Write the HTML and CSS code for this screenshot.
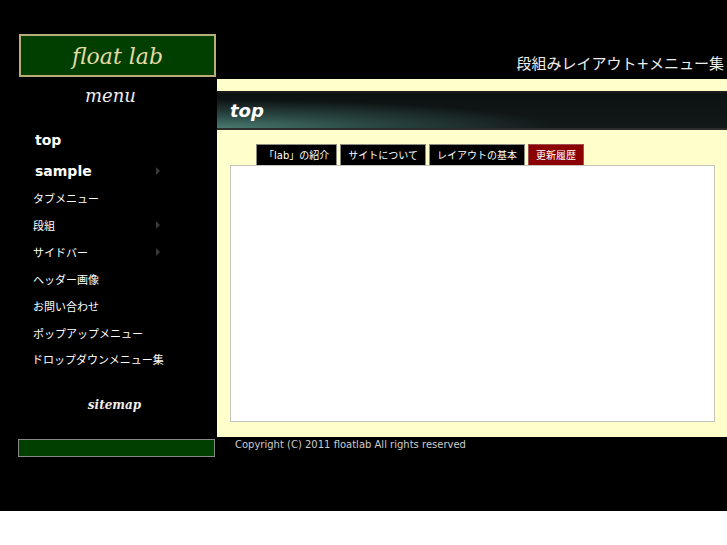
FILE: index.html
```html
<!DOCTYPE html>
<html lang="ja">
<head>
    <meta charset="UTF-8">
    <meta name="viewport" content="width=device-width, initial-scale=1.0">
    <title>float lab</title>
    <link rel="stylesheet" href="styles.css">
</head>
<body>
    <div class="page">
        <div class="side">
            <div class="logo">float lab</div>
            <div class="menu-title">menu</div>
            <ul class="nav">
                <li class="nav-main first"><a href="#">top</a></li>
                <li class="nav-main has-sub"><a href="#">sample</a></li>
                <li class="nav-sub"><a href="#">タブメニュー</a></li>
                <li class="nav-sub has-sub"><a href="#">段組</a></li>
                <li class="nav-sub has-sub"><a href="#">サイドバー</a></li>
                <li class="nav-sub"><a href="#">ヘッダー画像</a></li>
                <li class="nav-sub"><a href="#">お問い合わせ</a></li>
                <li class="nav-sub"><a href="#">ポップアップメニュー</a></li>
                <li class="nav-sub last"><a href="#">ドロップダウンメニュー集</a></li>
            </ul>
            <div class="sitemap"><a href="#">sitemap</a></div>
            <div class="side-bar"></div>
        </div>
        <div class="right">
            <div class="header">段組みレイアウト+メニュー集</div>
            <div class="main">
                <h1 class="banner">top</h1>
                <ul class="tabs">
                    <li><a href="#">「lab」の紹介</a></li>
                    <li><a href="#">サイトについて</a></li>
                    <li><a href="#">レイアウトの基本</a></li>
                    <li class="active"><a href="#">更新履歴</a></li>
                </ul>
                <div class="tab-body"></div>
            </div>
            <div class="footer">Copyright (C) 2011 floatlab All rights reserved</div>
        </div>
    </div>
</body>
</html>
```

FILE: styles.css
```css
body {
    margin: 0;
    padding: 0;
    background-color: #fff;
    font-family: "DejaVu Sans", "Noto Sans CJK JP", sans-serif;
}
a {
    color: inherit;
    text-decoration: none;
}
ul {
    list-style: none;
    margin: 0;
    padding: 0;
}
.page {
    display: flex;
    height: 511px;
    background-color: #000;
}
.side {
    width: 199px;
    padding: 34px 0 0 18px;
    flex-shrink: 0;
}
.logo {
    width: 193px;
    height: 39px;
    margin-left: 1px;
    border: 2px solid #b8ac78;
    background-color: #003f00;
    color: #e4dca4;
    font-family: "DejaVu Serif", serif;
    font-style: italic;
    font-size: 22px;
    line-height: 41px;
    text-align: center;
}
.menu-title {
    margin-top: 7px;
    color: #eee;
    font-family: "DejaVu Serif", serif;
    font-style: italic;
    font-size: 18px;
    line-height: 24px;
    text-align: center;
    padding-right: 14px;
}
.nav {
    margin-top: 14px;
    width: 142px;
}
.nav li {
    display: flex;
    justify-content: space-between;
    align-items: center;
    color: #fff;
    white-space: nowrap;
}
.nav-main {
    height: 27px;
    padding-left: 17px;
    font-size: 14px;
    font-weight: bold;
}
.nav .first {
    height: 35px;
}
.nav-sub {
    height: 27px;
    padding-left: 15px;
    font-size: 11px;
}
.nav .last {
    padding-left: 14px;
    height: 25px;
}
.nav .has-sub::after {
    content: "";
    border-left: 4px solid #3a3a3a;
    border-top: 4px solid transparent;
    border-bottom: 4px solid transparent;
}
.sitemap {
    margin-top: 27px;
    color: #eee;
    font-family: "DejaVu Serif", serif;
    font-style: italic;
    font-weight: bold;
    font-size: 12px;
    line-height: 15px;
    text-align: center;
    padding-right: 6px;
}
.side-bar {
    margin-top: 26px;
    width: 195px;
    height: 16px;
    border: 1px solid #888;
    background-color: #003f00;
}
.right {
    flex: 1;
}
.header {
    height: 79px;
    box-sizing: border-box;
    padding: 0 3px 6px 0;
    display: flex;
    align-items: flex-end;
    justify-content: flex-end;
    color: #eee;
    font-size: 15px;
}
.main {
    height: 346px;
    padding-top: 12px;
    background-color: #ffffcc;
}
.banner {
    margin: 0;
    height: 35px;
    padding-left: 13px;
    border-top: 2px solid #1c1c1c;
    border-bottom: 2px solid #2c2c2c;
    background: radial-gradient(ellipse 340px 28px at 0 100%, #4a7a70 0%, #2a4844 45%, rgba(14, 22, 22, 0) 100%), linear-gradient(#0c1212, #131818);
    color: #fff;
    font-size: 18px;
    font-style: italic;
    font-weight: bold;
    line-height: 35px;
}
.tabs {
    display: flex;
    gap: 3px;
    margin: 14px 0 0 39px;
}
.tabs li {
    height: 20px;
    border: 1px solid #8a8a80;
    border-bottom: none;
    background-color: #000;
    color: #fff;
    font-size: 10px;
    line-height: 21px;
    padding: 0 7px;
}
.tabs li.active {
    background-color: #8b0000;
    border-color: #a05050;
}
.tab-body {
    height: 255px;
    margin: 0 12px 0 13px;
    border: 1px solid #c4c4bc;
    background-color: #fff;
}
.footer {
    padding: 2px 0 0 18px;
    color: #ccc;
    font-size: 10px;
    line-height: 12px;
}
```
